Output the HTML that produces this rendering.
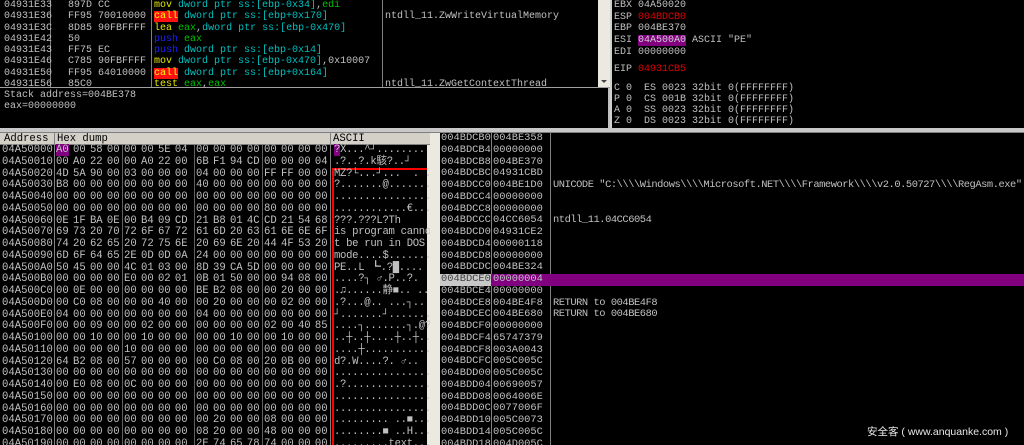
<!DOCTYPE html>
<html><head><meta charset="utf-8"><style>
*{margin:0;padding:0;box-sizing:border-box}
body{width:1024px;height:445px;background:#000;overflow:hidden;position:relative;font-family:"Liberation Mono","Noto Sans CJK SC",monospace;font-size:10px;color:#c0c0c0}
.a{position:absolute;white-space:pre;line-height:11.3px}
.p{position:absolute;background:#000;overflow:hidden}
.vl{position:absolute;width:1px;background:#808080}
.y{color:#e8e800}.c{color:#00c0c0}.g{color:#00c000}.b{color:#2020ff}.r{background:#ff1010;color:#ffff00}
.hr{position:absolute;left:0;height:11.75px;line-height:11.75px;white-space:pre;font-size:10.6px}
.hr b{position:absolute;left:2px;font-weight:normal}
.hr i{position:absolute;font-style:normal;word-spacing:-2.1px}
.hr u{position:absolute;left:334px;text-decoration:none;letter-spacing:-0.3px}
.sr{position:absolute;left:0;height:11.75px;line-height:11.75px;white-space:pre;width:584px;font-size:10.4px}
.sr b{position:absolute;left:1px;font-weight:normal}
.sr i{position:absolute;left:53px;font-style:normal}
.sr u{position:absolute;left:113px;text-decoration:none;letter-spacing:-0.45px}
</style></head><body>
<div class="p" style="left:0;top:0;width:598px;height:87px">
<div class="vl" style="left:50px;top:0;height:87px"></div>
<div class="vl" style="left:151px;top:0;height:87px"></div>
<div class="vl" style="left:382px;top:0;height:87px"></div>
<div class="a" style="left:4px;top:0">04931E33
04931E36
04931E3C
04931E42
04931E43
04931E46
04931E50
04931E56</div>
<div class="a" style="left:68px;top:0">897D CC
FF95 70010000
8D85 90FBFFFF
50
FF75 EC
C785 90FBFFFF
FF95 64010000
85C0</div>
<div class="a" style="left:154px;top:0"><span class="y">mov</span> <span class="c">dword ptr ss:[ebp-0x34]</span>,<span class="g">edi</span>
<span class="r">call</span> <span class="c">dword ptr ss:[ebp+0x170]</span>
<span class="y">lea</span> <span class="g">eax</span>,<span class="c">dword ptr ss:[ebp-0x470]</span>
<span class="b">push</span> <span class="g">eax</span>
<span class="b">push</span> <span class="c">dword ptr ss:[ebp-0x14]</span>
<span class="y">mov</span> <span class="c">dword ptr ss:[ebp-0x470]</span>,0x10007
<span class="r">call</span> <span class="c">dword ptr ss:[ebp+0x164]</span>
<span class="y">test</span> <span class="g">eax</span>,<span class="g">eax</span></div>
<div class="a" style="left:385px;top:11.3px">ntdll_11.ZwWriteVirtualMemory





ntdll_11.ZwGetContextThread</div>
</div>
<div style="position:absolute;left:598px;top:0;width:12px;height:88px;background:#ece9e0"><div style="position:absolute;left:3px;top:80px;border:3px solid transparent;border-top:3px solid #444"></div></div>
<div style="position:absolute;left:0;top:87px;width:610px;height:1px;background:#a0a0a0"></div>
<div class="p" style="left:0;top:88px;width:610px;height:40px;border-right:2px solid #c0c0c0">
<div class="a" style="left:4px;top:2px">Stack address=004BE378
eax=00000000</div></div>
<div class="p" style="left:610px;top:0;width:414px;height:128px;border-left:2px solid #d0d0d0">
<div class="a" style="left:2px;top:0;line-height:11.7px">EBX 04A50020
ESP <span style="color:#e00000">004BDCB0</span>
EBP 004BE370
ESI <span style="background:#800080;color:#d0d0d0">04A500A0</span> ASCII "PE"
EDI 00000000</div>
<div class="a" style="left:2px;top:64px">EIP <span style="color:#e00000">04931CB5</span></div>
<div class="a" style="left:2px;top:83px;line-height:11px">C 0  ES 0023 32bit 0(FFFFFFFF)
P 0  CS 001B 32bit 0(FFFFFFFF)
A 0  SS 0023 32bit 0(FFFFFFFF)
Z 0  DS 0023 32bit 0(FFFFFFFF)</div></div>
<div style="position:absolute;left:0;top:128px;width:1024px;height:5px;background:#c8c8c8;border-bottom:1px solid #808080"></div>
<div class="p" style="left:0;top:133px;width:430px;height:312px">
<div style="position:absolute;left:0;top:0;width:430px;height:12px;background:#d4d0c8;color:#000;line-height:12px;border-bottom:1px solid #808080;font-size:10.6px">
<span style="position:absolute;left:4px">Address</span><span style="position:absolute;left:54px;top:0;width:1px;height:12px;background:#808080"></span><span style="position:absolute;left:57px">Hex dump</span><span style="position:absolute;left:330px;top:0;width:1px;height:12px;background:#808080"></span><span style="position:absolute;left:333px">ASCII</span></div>
<div class="vl" style="left:54px;top:12px;height:300px"></div>
<div class="vl" style="left:122px;top:12px;height:300px;background:#606060"></div>
<div class="vl" style="left:194px;top:12px;height:300px;background:#606060"></div>
<div class="vl" style="left:262px;top:12px;height:300px;background:#606060"></div>
<div class="vl" style="left:330px;top:12px;height:300px"></div>
<div style="position:absolute;left:332px;top:35px;width:101px;height:277px;border:2px solid #ff0000;border-bottom:none"></div>
<div style="position:absolute;left:427px;top:12px;width:3px;height:300px;background:#ece9e0"></div>
<div style="position:absolute;left:0;top:12px">
<div class="hr" style="top:0"><b>04A50000</b><i style="left:56px"><span style="background:#800080">A0</span> 00 58 00</i><i style="left:124px">00 00 5E 04</i><i style="left:196px">00 00 00 00</i><i style="left:264px">00 00 00 00</i><u><span style="background:#800080">?</span>X...^┘........</u></div>
<div class="hr" style="top:11.75px"><b>04A50010</b><i style="left:56px">00 A0 22 00</i><i style="left:124px">00 A0 22 00</i><i style="left:196px">6B F1 94 CD</i><i style="left:264px">00 00 00 04</i><u>.?..?.k駭?..┘</u></div>
<div class="hr" style="top:23.5px"><b>04A50020</b><i style="left:56px">4D 5A 90 00</i><i style="left:124px">03 00 00 00</i><i style="left:196px">04 00 00 00</i><i style="left:264px">FF FF 00 00</i><u>MZ?└...┘...  . .</u></div>
<div class="hr" style="top:35.25px"><b>04A50030</b><i style="left:56px">B8 00 00 00</i><i style="left:124px">00 00 00 00</i><i style="left:196px">40 00 00 00</i><i style="left:264px">00 00 00 00</i><u>?.......@.......</u></div>
<div class="hr" style="top:47px"><b>04A50040</b><i style="left:56px">00 00 00 00</i><i style="left:124px">00 00 00 00</i><i style="left:196px">00 00 00 00</i><i style="left:264px">00 00 00 00</i><u>................</u></div>
<div class="hr" style="top:58.75px"><b>04A50050</b><i style="left:56px">00 00 00 00</i><i style="left:124px">00 00 00 00</i><i style="left:196px">00 00 00 00</i><i style="left:264px">80 00 00 00</i><u>............€...</u></div>
<div class="hr" style="top:70.5px"><b>04A50060</b><i style="left:56px">0E 1F BA 0E</i><i style="left:124px">00 B4 09 CD</i><i style="left:196px">21 B8 01 4C</i><i style="left:264px">CD 21 54 68</i><u>???.???L?Th</u></div>
<div class="hr" style="top:82.25px"><b>04A50070</b><i style="left:56px">69 73 20 70</i><i style="left:124px">72 6F 67 72</i><i style="left:196px">61 6D 20 63</i><i style="left:264px">61 6E 6E 6F</i><u>is program canno</u></div>
<div class="hr" style="top:94px"><b>04A50080</b><i style="left:56px">74 20 62 65</i><i style="left:124px">20 72 75 6E</i><i style="left:196px">20 69 6E 20</i><i style="left:264px">44 4F 53 20</i><u>t be run in DOS </u></div>
<div class="hr" style="top:105.75px"><b>04A50090</b><i style="left:56px">6D 6F 64 65</i><i style="left:124px">2E 0D 0D 0A</i><i style="left:196px">24 00 00 00</i><i style="left:264px">00 00 00 00</i><u>mode....$.......</u></div>
<div class="hr" style="top:117.5px"><b>04A500A0</b><i style="left:56px">50 45 00 00</i><i style="left:124px">4C 01 03 00</i><i style="left:196px">8D 39 CA 5D</i><i style="left:264px">00 00 00 00</i><u>PE..L ┗.?█....</u></div>
<div class="hr" style="top:129.25px"><b>04A500B0</b><i style="left:56px">00 00 00 00</i><i style="left:124px">E0 00 02 01</i><i style="left:196px">0B 01 50 00</i><i style="left:264px">00 94 08 00</i><u>....?┐ ♂.P..?.</u></div>
<div class="hr" style="top:141px"><b>04A500C0</b><i style="left:56px">00 0E 00 00</i><i style="left:124px">00 00 00 00</i><i style="left:196px">BE B2 08 00</i><i style="left:264px">00 20 00 00</i><u>.♫......静■.. ..</u></div>
<div class="hr" style="top:152.75px"><b>04A500D0</b><i style="left:56px">00 C0 08 00</i><i style="left:124px">00 00 40 00</i><i style="left:196px">00 20 00 00</i><i style="left:264px">00 02 00 00</i><u>.?...@.. ...┐..</u></div>
<div class="hr" style="top:164.5px"><b>04A500E0</b><i style="left:56px">04 00 00 00</i><i style="left:124px">00 00 00 00</i><i style="left:196px">04 00 00 00</i><i style="left:264px">00 00 00 00</i><u>┘.......┘.......</u></div>
<div class="hr" style="top:176.25px"><b>04A500F0</b><i style="left:56px">00 00 09 00</i><i style="left:124px">00 02 00 00</i><i style="left:196px">00 00 00 00</i><i style="left:264px">02 00 40 85</i><u>....┐.......┐.@?</u></div>
<div class="hr" style="top:188px"><b>04A50100</b><i style="left:56px">00 00 10 00</i><i style="left:124px">00 10 00 00</i><i style="left:196px">00 00 10 00</i><i style="left:264px">00 10 00 00</i><u>..┼..┼....┼..┼..</u></div>
<div class="hr" style="top:199.75px"><b>04A50110</b><i style="left:56px">00 00 00 00</i><i style="left:124px">10 00 00 00</i><i style="left:196px">00 00 00 00</i><i style="left:264px">00 00 00 00</i><u>....┼...........</u></div>
<div class="hr" style="top:211.5px"><b>04A50120</b><i style="left:56px">64 B2 08 00</i><i style="left:124px">57 00 00 00</i><i style="left:196px">00 C0 08 00</i><i style="left:264px">20 0B 00 00</i><u>d?.W....?. ♂..</u></div>
<div class="hr" style="top:223.25px"><b>04A50130</b><i style="left:56px">00 00 00 00</i><i style="left:124px">00 00 00 00</i><i style="left:196px">00 00 00 00</i><i style="left:264px">00 00 00 00</i><u>................</u></div>
<div class="hr" style="top:235px"><b>04A50140</b><i style="left:56px">00 E0 08 00</i><i style="left:124px">0C 00 00 00</i><i style="left:196px">00 00 00 00</i><i style="left:264px">00 00 00 00</i><u>.?..............</u></div>
<div class="hr" style="top:246.75px"><b>04A50150</b><i style="left:56px">00 00 00 00</i><i style="left:124px">00 00 00 00</i><i style="left:196px">00 00 00 00</i><i style="left:264px">00 00 00 00</i><u>................</u></div>
<div class="hr" style="top:258.5px"><b>04A50160</b><i style="left:56px">00 00 00 00</i><i style="left:124px">00 00 00 00</i><i style="left:196px">00 00 00 00</i><i style="left:264px">00 00 00 00</i><u>................</u></div>
<div class="hr" style="top:270.25px"><b>04A50170</b><i style="left:56px">00 00 00 00</i><i style="left:124px">00 00 00 00</i><i style="left:196px">00 20 00 00</i><i style="left:264px">08 00 00 00</i><u>......... ..■...</u></div>
<div class="hr" style="top:282px"><b>04A50180</b><i style="left:56px">00 00 00 00</i><i style="left:124px">00 00 00 00</i><i style="left:196px">08 20 00 00</i><i style="left:264px">48 00 00 00</i><u>........■ ..H...</u></div>
<div class="hr" style="top:293.75px"><b>04A50190</b><i style="left:56px">00 00 00 00</i><i style="left:124px">00 00 00 00</i><i style="left:196px">2E 74 65 78</i><i style="left:264px">74 00 00 00</i><u>.........text...</u></div>
</div></div>
<div style="position:absolute;left:430px;top:133px;width:10px;height:312px;background:#ece9e0"></div>
<div class="p" style="left:440px;top:133px;width:584px;height:312px">
<div class="vl" style="left:51px;top:0;height:312px"></div>
<div class="vl" style="left:110px;top:0;height:312px"></div>
<div style="position:absolute;left:0;top:0">
<div class="sr" style="top:0"><b>004BDCB0</b><i>004BE358</i></div>
<div class="sr" style="top:11.75px"><b>004BDCB4</b><i>00000000</i></div>
<div class="sr" style="top:23.5px"><b>004BDCB8</b><i>004BE370</i></div>
<div class="sr" style="top:35.25px"><b>004BDCBC</b><i>04931CBD</i></div>
<div class="sr" style="top:47px"><b>004BDCC0</b><i>004BE1D0</i><u>UNICODE "C:\\\\Windows\\\\Microsoft.NET\\\\Framework\\\\v2.0.50727\\\\RegAsm.exe"</u></div>
<div class="sr" style="top:58.75px"><b>004BDCC4</b><i>00000000</i></div>
<div class="sr" style="top:70.5px"><b>004BDCC8</b><i>00000000</i></div>
<div class="sr" style="top:82.25px"><b>004BDCCC</b><i>04CC6054</i><u>ntdll_11.04CC6054</u></div>
<div class="sr" style="top:94px"><b>004BDCD0</b><i>04931CE2</i></div>
<div class="sr" style="top:105.75px"><b>004BDCD4</b><i>00000118</i></div>
<div class="sr" style="top:117.5px"><b>004BDCD8</b><i>00000000</i></div>
<div class="sr" style="top:129.25px"><b>004BDCDC</b><i>004BE324</i></div>
<div class="sr" style="top:141px;background:#800080"><b style="left:0;width:51px;padding-left:1px;background:#c8c8c8;color:#404040">004BDCE0</b><i>00000004</i></div>
<div class="sr" style="top:152.75px"><b>004BDCE4</b><i>00000000</i></div>
<div class="sr" style="top:164.5px"><b>004BDCE8</b><i>004BE4F8</i><u>RETURN to 004BE4F8</u></div>
<div class="sr" style="top:176.25px"><b>004BDCEC</b><i>004BE680</i><u>RETURN to 004BE680</u></div>
<div class="sr" style="top:188px"><b>004BDCF0</b><i>00000000</i></div>
<div class="sr" style="top:199.75px"><b>004BDCF4</b><i>65747379</i></div>
<div class="sr" style="top:211.5px"><b>004BDCF8</b><i>003A0043</i></div>
<div class="sr" style="top:223.25px"><b>004BDCFC</b><i>005C005C</i></div>
<div class="sr" style="top:235px"><b>004BDD00</b><i>005C005C</i></div>
<div class="sr" style="top:246.75px"><b>004BDD04</b><i>00690057</i></div>
<div class="sr" style="top:258.5px"><b>004BDD08</b><i>0064006E</i></div>
<div class="sr" style="top:270.25px"><b>004BDD0C</b><i>0077006F</i></div>
<div class="sr" style="top:282px"><b>004BDD10</b><i>005C0073</i></div>
<div class="sr" style="top:293.75px"><b>004BDD14</b><i>005C005C</i></div>
<div class="sr" style="top:305.5px"><b>004BDD18</b><i>004D005C</i></div>
</div></div>
<div style="position:absolute;left:867px;top:424px;color:#e8e8e8;font-family:'Liberation Sans','Noto Sans CJK SC',sans-serif;font-size:10.5px;white-space:pre">安全客 ( www.anquanke.com )</div>
</body></html>
